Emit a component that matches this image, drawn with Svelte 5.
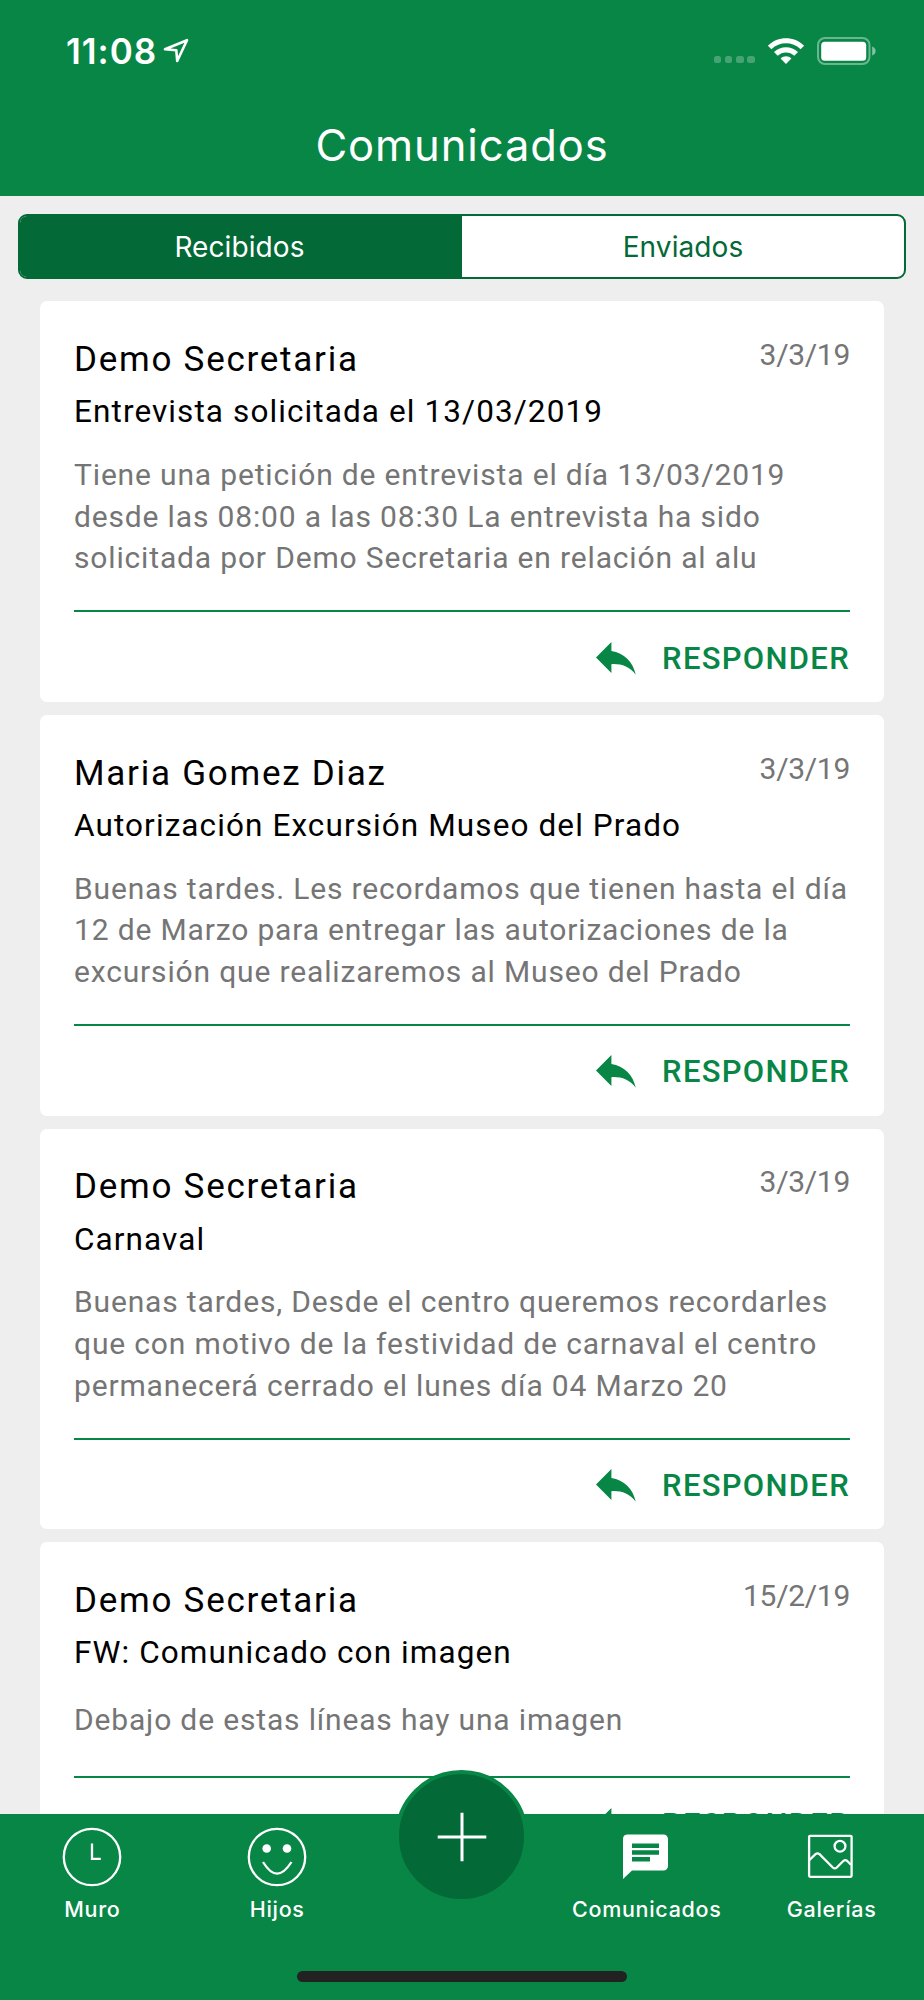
<script lang="ts">
  type Message = { from: string; date: string; subject: string; lines: string[] };

  const messages: Message[] = [
    {
      from: "Demo Secretaria",
      date: "3/3/19",
      subject: "Entrevista solicitada el 13/03/2019",
      lines: [
        "Tiene una petición de entrevista el día 13/03/2019",
        "desde las 08:00 a las 08:30 La entrevista ha sido",
        "solicitada por Demo Secretaria en relación al alu",
      ],
    },
    {
      from: "Maria Gomez Diaz",
      date: "3/3/19",
      subject: "Autorización Excursión Museo del Prado",
      lines: [
        "Buenas tardes. Les recordamos que tienen hasta el día",
        "12 de Marzo para entregar las autorizaciones de la",
        "excursión que realizaremos al Museo del Prado",
      ],
    },
    {
      from: "Demo Secretaria",
      date: "3/3/19",
      subject: "Carnaval",
      lines: [
        "Buenas tardes, Desde el centro queremos recordarles",
        "que con motivo de la festividad de carnaval el centro",
        "permanecerá cerrado el lunes día 04 Marzo 20",
      ],
    },
    {
      from: "Demo Secretaria",
      date: "15/2/19",
      subject: "FW: Comunicado con imagen",
      lines: ["Debajo de estas líneas hay una imagen"],
    },
  ];

  let folder = $state("Recibidos");
</script>

<div class="app">
  <header>
    <div class="status">
      <span class="time">11:08</span>
      <svg class="location" width="26" height="26" viewBox="0 0 26 26">
        <path d="M2 11.3 24 2.2 14.2 23 13.3 12.2Z" />
      </svg>
      <div class="dots"><i></i><i></i><i></i><i></i></div>
      <svg class="wifi" width="38" height="28" viewBox="0 0 38 28">
        <path d="M.9 8.7C11-1.1 27-1.1 37.1 8.7L33.6 12.2C25.4 4.3 12.6 4.3 4.4 12.2Z" />
        <path d="M7 15.1C13.6 8.5 24.4 8.5 31 15.1L27.3 18.8C22.8 14.3 15.2 14.3 10.7 18.8Z" />
        <path d="M13.6 21.5C16.6 18.5 21.4 18.5 24.4 21.5L19 27Z" />
      </svg>
      <svg class="battery" width="60" height="28" viewBox="0 0 60 28">
        <rect class="shell" x="1" y="1" width="51.5" height="26" rx="7" />
        <rect class="charge" x="4.2" y="4.7" width="45" height="19" rx="3.5" />
        <path class="nub" d="M55.2 9.5Q58.6 11 58.6 14T55.2 18.5Z" />
      </svg>
    </div>
    <h1>Comunicados</h1>
  </header>

  <div class="segments">
    {#each ["Recibidos", "Enviados"] as name}
      <button class:active={folder === name} onclick={() => (folder = name)}>{name}</button>
    {/each}
  </div>

  <main>
    {#each messages as m}
      <article>
        <div class="top">
          <h2>{m.from}</h2>
          <time>{m.date}</time>
        </div>
        <h3>{m.subject}</h3>
        <p>
          {#each m.lines as line}
            <span>{line}</span>
          {/each}
        </p>
        <div class="actions">
          <button class="reply">
            <svg width="40" height="33" viewBox="0 0 40 33">
              <path d="M0 15.4 15.4 0V8.9C28 11 37 19.5 39.8 32.8 33.5 24.5 25 21.6 15.4 22.2V31Z" />
            </svg>
            RESPONDER
          </button>
        </div>
      </article>
    {/each}
  </main>

  <nav>
    <button class="tab">
      <svg width="60" height="60" viewBox="0 0 60 60">
        <circle cx="30" cy="30" r="28.2" />
        <path d="M30 16.5V31.8H38.8" />
      </svg>
      Muro
    </button>
    <button class="tab">
      <svg width="60" height="60" viewBox="0 0 60 60">
        <circle cx="30" cy="30" r="28.2" />
        <circle class="solid" cx="19.7" cy="21.5" r="4.3" />
        <circle class="solid" cx="40" cy="21.5" r="4.3" />
        <path d="M16 35C25.5 50.5 34.5 50.5 44.5 35" />
      </svg>
      Hijos
    </button>
    <div class="tab">
      <button class="fab" aria-label="Nuevo comunicado">
        <svg width="50" height="50" viewBox="0 0 50 50">
          <path d="M25 .7V49.3M.7 25H49.3" />
        </svg>
      </button>
    </div>
    <button class="tab">
      <svg width="60" height="60" viewBox="2 0 60 60">
        <path
          class="solid"
          fill-rule="evenodd"
          d="M12 7.5H48.5A4.5 4.5 0 0 1 53 12V39A4.5 4.5 0 0 1 48.5 43.5H17L8 52V12A4.5 4.5 0 0 1 12 7.5ZM17 16.5V21H44V16.5ZM17 23.3V27.8H44V23.3ZM17 30V34.5H35V30Z"
        />
      </svg>
      Comunicados
    </button>
    <button class="tab">
      <svg width="60" height="60" viewBox="2 0 60 60">
        <rect x="9.1" y="8.8" width="42.5" height="41" rx="1" />
        <circle cx="40" cy="19.2" r="5.4" />
        <path d="M9.5 33 15.5 27.2Q17.5 25.5 19.5 27.2L32.8 40.5Q34.8 42.3 36.8 40.5L43.5 33.8Q45.2 32.5 47 33.8L51 37.8" />
      </svg>
      Galerías
    </button>
    <div class="home"></div>
  </nav>
</div>

<style>
  :global(body) {
    background: #eee;
  }
  .app {
    --green: #088646;
    --dark: #036937;
    display: flex;
    flex-direction: column;
    height: 2000px;
    overflow: hidden;
    background: #eee;
    font-family: Roboto, "Liberation Sans", sans-serif;
  }
  button {
    border: 0;
    padding: 0;
    background: none;
    font: inherit;
    color: inherit;
  }
  h1,
  h2,
  h3,
  p {
    margin: 0;
    font-weight: 400;
  }
  header {
    flex: none;
    height: 196.4px;
    background: var(--green);
    color: #fff;
    font-family: Inter, sans-serif;
  }
  .status {
    display: flex;
    align-items: center;
    height: 101px;
    padding: 0 47px 0 66px;
  }
  .time {
    width: 97px;
    font-size: 35px;
    font-weight: 600;
    letter-spacing: 1px;
  }
  .location {
    fill: none;
    stroke: #fff;
    stroke-width: 2.6;
    stroke-linejoin: round;
  }
  .dots {
    display: flex;
    gap: 3.7px;
    margin: 18px 12px 0 auto;
  }
  .dots i {
    width: 7.6px;
    height: 7.6px;
    border-radius: 2.5px;
    background: rgba(255, 255, 255, 0.25);
  }
  .wifi {
    fill: #fff;
  }
  .battery {
    margin-left: 12px;
  }
  .shell {
    fill: none;
    stroke: rgba(255, 255, 255, 0.4);
    stroke-width: 2;
  }
  .charge {
    fill: #fff;
  }
  .nub {
    fill: rgba(255, 255, 255, 0.5);
  }
  h1 {
    text-align: center;
    font-size: 43.5px;
    font-weight: 370;
    line-height: 52px;
    padding-top: 18px;
    letter-spacing: 0.9px;
  }
  .segments {
    flex: none;
    display: flex;
    height: 61px;
    margin: 18px 18px 22px;
    border: 2px solid var(--dark);
    border-radius: 9px;
    background: #fff;
    overflow: hidden;
  }
  .segments button {
    flex: 1 0 0;
    font-family: Inter, sans-serif;
    font-size: 28px;
    letter-spacing: 0.1px;
    color: var(--dark);
  }
  .segments .active {
    background: var(--dark);
    color: #fff;
    text-indent: -3px;
  }
  main {
    flex: 1;
    min-height: 0;
    overflow: hidden;
    padding: 0 40px;
  }
  article {
    padding: 37.5px 34px 0;
    margin-bottom: 13px;
    border-radius: 7px;
    background: #fff;
  }
  .top {
    display: flex;
    justify-content: space-between;
  }
  h2 {
    font-size: 35px;
    line-height: 42px;
    letter-spacing: 1.75px;
  }
  time {
    margin-top: -5px;
    font-size: 30px;
    line-height: 42px;
    letter-spacing: -0.3px;
    color: #757575;
  }
  h3 {
    margin: 10.5px 0 20.5px;
    font-size: 31.5px;
    line-height: 42px;
    letter-spacing: 1.1px;
  }
  p {
    display: flex;
    flex-direction: column;
    justify-content: center;
    min-height: 50.5px;
    font-size: 30px;
    line-height: 41.8px;
    letter-spacing: 0.84px;
    color: #757575;
    white-space: nowrap;
  }
  .actions {
    display: flex;
    justify-content: flex-end;
    height: 87.8px;
    margin-top: 31px;
    padding-top: 2px;
    border-top: 2px solid var(--green);
  }
  .reply {
    display: flex;
    align-items: center;
    gap: 26px;
    color: var(--green);
    font-size: 31px;
    font-weight: 500;
    letter-spacing: 1.3px;
  }
  .reply svg {
    fill: currentColor;
  }
  nav {
    position: relative;
    flex: none;
    display: flex;
    height: 186px;
    background: var(--green);
    color: #fff;
  }
  .tab {
    flex: 1 0 0;
    min-width: 0;
    display: flex;
    flex-direction: column;
    align-items: center;
    padding-top: 13px;
    font-family: Inter, sans-serif;
    font-size: 21.5px;
    font-weight: 500;
    line-height: 26px;
    letter-spacing: 0.7px;
  }
  .tab svg {
    flex: none;
    margin-bottom: 8.5px;
    fill: none;
    stroke: #fff;
    stroke-width: 2.3;
  }
  .tab svg .solid {
    fill: #fff;
    stroke: none;
  }
  .fab {
    position: absolute;
    top: -44px;
    display: grid;
    place-items: center;
    width: 133px;
    height: 133px;
    border: 4px solid var(--green);
    border-radius: 50%;
    background: var(--dark);
  }
  .tab .fab svg {
    margin: 0;
    stroke-width: 3;
  }
  .home {
    position: absolute;
    left: 297px;
    bottom: 18px;
    width: 330px;
    height: 11px;
    border-radius: 6px;
    background: #222;
  }
</style>
